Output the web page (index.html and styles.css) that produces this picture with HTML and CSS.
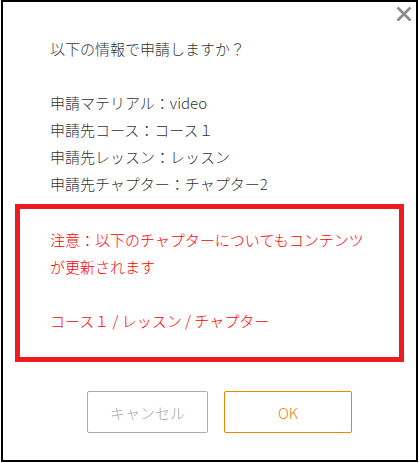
FILE: index.html
```html
<!DOCTYPE html>
<html lang="ja">
<head>
  <meta charset="UTF-8">
  <meta name="viewport" content="width=device-width, initial-scale=1.0">
  <title>申請確認</title>
  <link rel="stylesheet" href="styles.css">
</head>
<body>
  <div class="dialog">
    <button class="close" aria-label="閉じる">
      <svg width="16" height="16" viewBox="0 0 16 16">
        <path d="M1.5 1.5 L14.5 14.5 M14.5 1.5 L1.5 14.5" stroke="#8a8a8a" stroke-width="2.6" fill="none"/>
      </svg>
    </button>

    <p class="question">以下の情報で申請しますか？</p>

    <div class="details">
      <div>申請マテリアル：video</div>
      <div>申請先コース：コース１</div>
      <div>申請先レッスン：レッスン</div>
      <div>申請先チャプター：チャプター2</div>
    </div>

    <div class="notice">
      <p class="notice-text">注意：以下のチャプターについてもコンテンツが更新されます</p>
      <p class="notice-path">コース１ / レッスン / チャプター</p>
    </div>

    <div class="actions">
      <button class="btn btn-cancel">キャンセル</button>
      <button class="btn btn-ok">OK</button>
    </div>
  </div>
</body>
</html>
```

FILE: styles.css
```css
body {
  margin: 0;
  background-color: #fff;
  font-family: "Noto Sans CJK JP", "Noto Sans", sans-serif;
  font-size: 15px;
  font-weight: 300;
  line-height: 27px;
  color: #333;
}
.dialog {
  position: relative;
  box-sizing: border-box;
  width: 417px;
  height: 462px;
  margin-left: 1px;
  padding-top: 33px;
  border: 2px solid #000;
  background-color: #fff;
}
.close {
  position: absolute;
  top: 4px;
  right: 4px;
  padding: 0;
  border: none;
  background: none;
  cursor: pointer;
}
.question {
  margin: 0 0 27px 47px;
}
.details {
  margin-left: 47px;
}
.notice {
  box-sizing: border-box;
  width: 389px;
  margin: 7px 0 0 12px;
  padding: 17px 30px 23px;
  border: 5px solid #ed1c24;
  color: #f00;
}
.notice p {
  margin: 0;
}
.notice-text {
  margin-bottom: 27px !important;
}
.actions {
  display: flex;
  gap: 16px;
  margin-top: 29px;
  padding-left: 84px;
}
.btn {
  box-sizing: border-box;
  height: 42px;
  border-radius: 2px;
  background-color: #fff;
  font-family: inherit;
  font-size: 15px;
  font-weight: 300;
  cursor: pointer;
}
.btn-cancel {
  width: 121px;
  border: 1px solid #acacac;
  color: #a8a8a8;
}
.btn-ok {
  width: 128px;
  border: 1px solid #f08300;
  color: #f08300;
}
```
